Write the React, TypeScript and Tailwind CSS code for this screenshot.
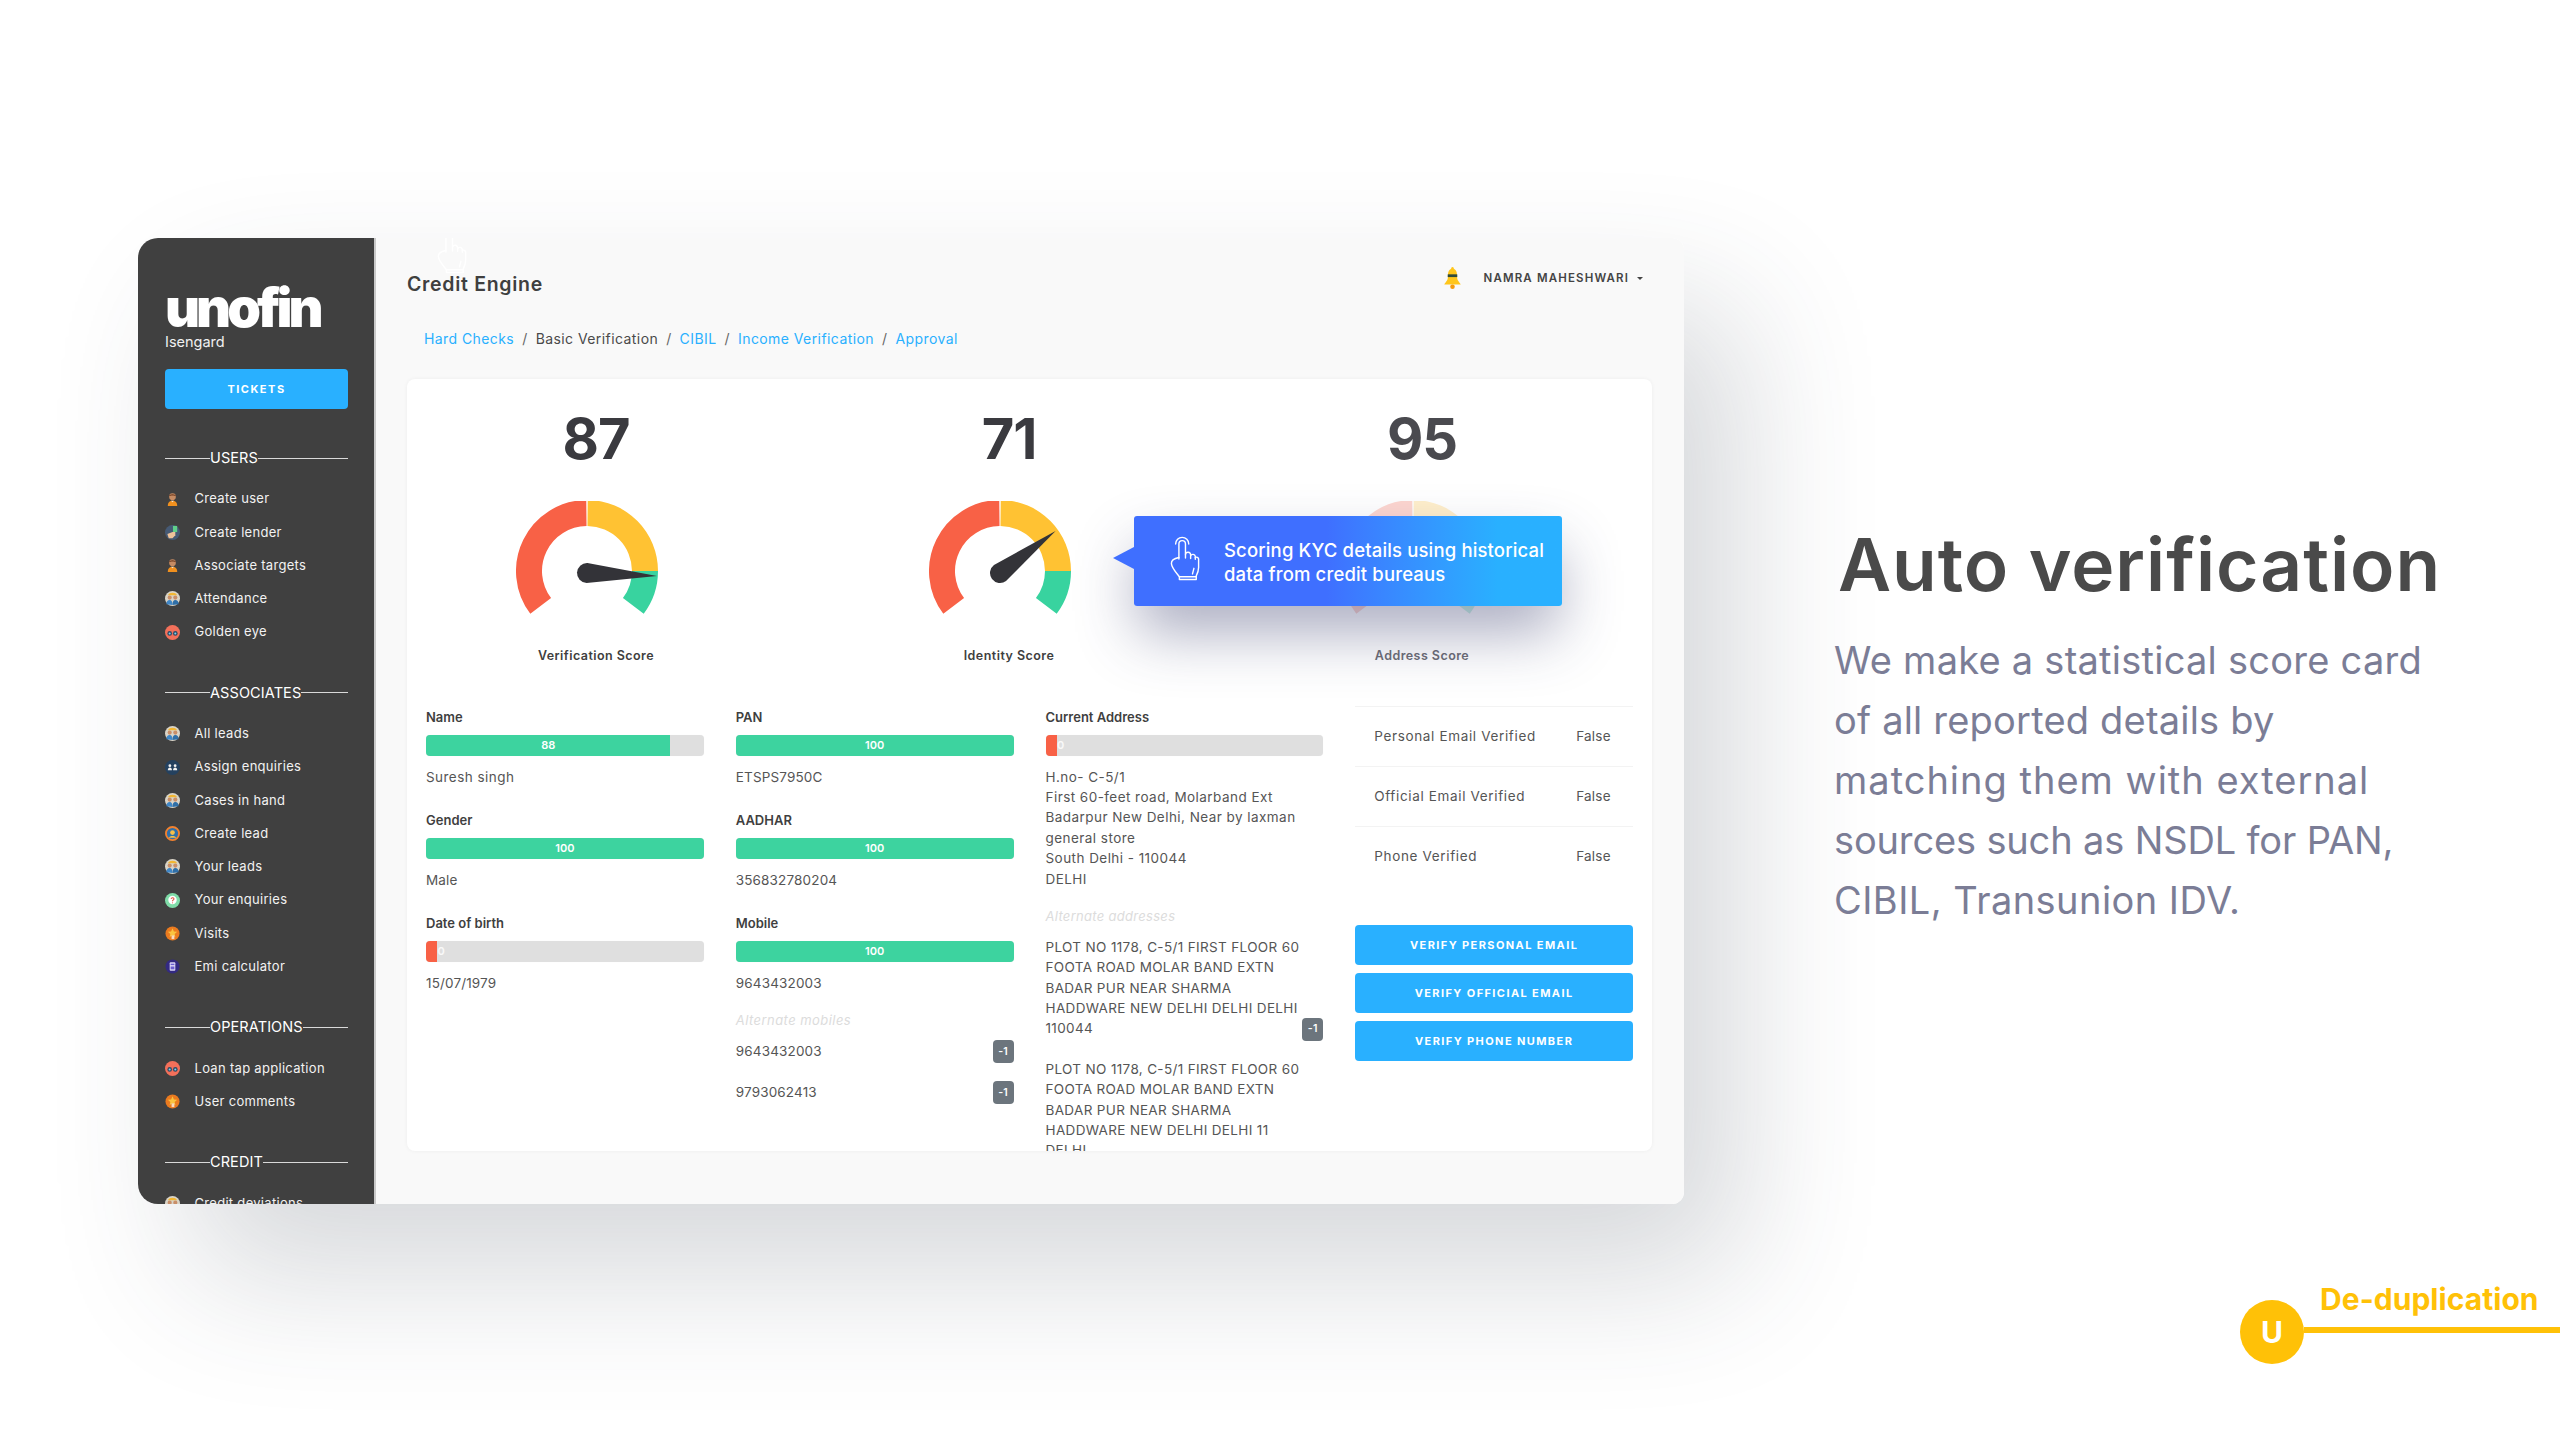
import type { ReactNode } from "react";

type IconName = "person" | "lender" | "team" | "eye" | "scale" | "gear" | "question" | "star" | "calc";

function MenuIcon({ name }: { name: IconName }) {
  return (
    <svg viewBox="0 0 16 16" className="w-[15px] h-[15px] shrink-0">
      {name === "person" && (
        <>
          <circle cx="8" cy="5" r="3.6" fill="#c58b63" />
          <path d="M4.2 4.6C4.4 1.6 11.6 1.6 11.8 4.6 10 3.4 6 3.4 4.2 4.6Z" fill="#6d3b20" />
          <path d="M3 15c0-4 2-5.6 5-5.6s5 1.6 5 5.6Z" fill="#f0901e" />
          <path d="M6.4 9.4 8 11l1.6-1.6Z" fill="#f5e6d8" />
        </>
      )}
      {name === "lender" && (
        <>
          <circle cx="8" cy="8" r="8" fill="#465a75" />
          <rect x="8.5" y="1" width="4.5" height="6.5" fill="#5fd08a" />
          <path d="M2.5 9.5 8 7.5h3v3.5L8 14H4Z" fill="#eec39a" />
        </>
      )}
      {name === "team" && (
        <>
          <circle cx="8" cy="8" r="8" fill="#d9d4c8" />
          <path d="M3 4.5C4.5 1 11.5 1 13 4.5Z" fill="#f2b632" />
          <circle cx="5" cy="7" r="2.2" fill="#c98e68" />
          <circle cx="11" cy="7" r="2.2" fill="#c98e68" />
          <path d="M1.500 14c0-3 1.500-4.500 3.500-4.500S8 11 8 15Z" fill="#3f86c6" />
          <path d="M8 15c0-4 1-5.500 3-5.500s3.500 1.500 3.500 4.500Z" fill="#2f6fa8" />
        </>
      )}
      {name === "eye" && (
        <>
          <circle cx="8" cy="8" r="8" fill="#f3705a" />
          <circle cx="5" cy="9" r="2.5" fill="#2e4b66" />
          <circle cx="11" cy="9" r="2.5" fill="#2e4b66" />
          <circle cx="5" cy="9" r="1.1" fill="#7fd0ee" />
          <circle cx="11" cy="9" r="1.1" fill="#7fd0ee" />
        </>
      )}
      {name === "scale" && (
        <>
          <circle cx="8" cy="8" r="8" fill="#24415f" />
          <circle cx="5.2" cy="6" r="1.5" fill="#f1f1f1" />
          <circle cx="10.8" cy="6" r="1.5" fill="#f1f1f1" />
          <path d="M3 11c0-2 1-3 2.200-3s2.200 1 2.200 3ZM8.600 11c0-2 1-3 2.200-3S13 9 13 11Z" fill="#f1f1f1" />
        </>
      )}
      {name === "gear" && (
        <>
          <circle cx="8" cy="8" r="7" fill="#2f6fa8" stroke="#f2812e" strokeWidth="2" />
          <circle cx="8" cy="7" r="2.5" fill="#f5c04a" />
          <path d="M4 12.500c1-2.500 7-2.500 8 0Z" fill="#f5c04a" />
        </>
      )}
      {name === "question" && (
        <>
          <circle cx="8" cy="8" r="8" fill="#7fdca8" />
          <circle cx="8" cy="7.5" r="4.5" fill="#fff" />
          <path d="M6.500 6.200c.3-1.700 3.200-1.500 3.100.2-.1 1-1.600 1-1.600 2.300M8 10v.9" stroke="#e0523f" strokeWidth="1.1" fill="none" />
        </>
      )}
      {name === "star" && (
        <>
          <circle cx="8" cy="8" r="7.5" fill="#ea7a1f" />
          <path d="m8 2.500 1.500 3.300 3.500.3-2.700 2.300.8 3.400L8 10.200l-3.100 1.600.8-3.400L3 6.100l3.500-.3Z" fill="#f9c440" />
          <rect x="7" y="10" width="3" height="4" fill="#f6dcc0" />
        </>
      )}
      {name === "calc" && (
        <>
          <circle cx="8" cy="8" r="7.5" fill="#332a82" />
          <rect x="5" y="3.5" width="6" height="9" rx="1" fill="#dcd8f5" />
          <rect x="6" y="5" width="4" height="1.5" fill="#6c5fd0" />
          <rect x="6" y="8" width="4" height="3" fill="#6c5fd0" />
        </>
      )}
    </svg>
  );
}

function MenuSection({ title, items }: { title: string; items: [IconName, string][] }) {
  return (
    <div className="mt-[34px]">
      <div className="flex items-center h-[20px] text-[14.5px] text-white tracking-[0.1px]">
        <div className="w-[45px] h-px bg-white/80" />
        <span>{title}</span>
        <div className="flex-1 h-px bg-white/80" />
      </div>
      <div className="mt-[14.5px]">
        {items.map(([icon, label]) => (
          <div key={label} className="flex items-center h-[33.25px]">
            <MenuIcon name={icon} />
            <span className="ml-[14.5px] text-[13px] text-[#f2f2f2] tracking-[0.3px] whitespace-nowrap">{label}</span>
          </div>
        ))}
      </div>
    </div>
  );
}

function Sidebar() {
  return (
    <div className="w-[238px] shrink-0 bg-[#404040] border-r-2 border-[#c9c9c9] pl-[27px] pr-[26px] pt-[43px] overflow-hidden">
      <div className="h-[53px] text-[54px] leading-[53px] font-black text-white tracking-[-4px]">unofin</div>
      <div className="h-[16px] text-[14.5px] leading-[16px] text-[#f0f0f0]">Isengard</div>
      <div className="mt-[19px] h-[40px] pt-px rounded-[4px] bg-[#29b0ff] flex items-center justify-center text-white text-[11px] font-bold tracking-[1.5px]">
        TICKETS
      </div>
      <div className="pt-[5px]">
        <MenuSection
          title="USERS"
          items={[
            ["person", "Create user"],
            ["lender", "Create lender"],
            ["person", "Associate targets"],
            ["team", "Attendance"],
            ["eye", "Golden eye"],
          ]}
        />
        <MenuSection
          title="ASSOCIATES"
          items={[
            ["team", "All leads"],
            ["scale", "Assign enquiries"],
            ["team", "Cases in hand"],
            ["gear", "Create lead"],
            ["team", "Your leads"],
            ["question", "Your enquiries"],
            ["star", "Visits"],
            ["calc", "Emi calculator"],
          ]}
        />
        <MenuSection
          title="OPERATIONS"
          items={[
            ["eye", "Loan tap application"],
            ["star", "User comments"],
          ]}
        />
        <MenuSection title="CREDIT" items={[["team", "Credit deviations"]]} />
      </div>
    </div>
  );
}

const polar = (r: number, deg: number) => {
  const a = (deg * Math.PI) / 180;
  return [r * Math.cos(a), r * Math.sin(a)];
};

const band = (from: number, to: number) => {
  const [x1, y1] = polar(71, from);
  const [x2, y2] = polar(71, to);
  const [x3, y3] = polar(45, to);
  const [x4, y4] = polar(45, from);
  return `M${x1} ${y1}A71 71 0 0 1 ${x2} ${y2}L${x3} ${y3}A45 45 0 0 0 ${x4} ${y4}Z`;
};

function Gauge({ tip, faded }: { tip?: [number, number]; faded?: boolean }) {
  let needle = "";
  if (tip) {
    const hub = [0, 2];
    const ang = Math.atan2(tip[1] - hub[1], tip[0] - hub[0]);
    const nx = -Math.sin(ang) * 10;
    const ny = Math.cos(ang) * 10;
    needle = `M${hub[0] + nx} ${hub[1] + ny}L${tip[0]} ${tip[1]}L${hub[0] - nx} ${hub[1] - ny}A10 10 0 0 0 ${hub[0] + nx} ${hub[1] + ny}Z`;
  }
  return (
    <svg viewBox="-71 -70 160 120" className={`w-[160px] h-[120px] mx-auto ${faded ? "opacity-25" : ""}`}>
      <path d={band(143, 269.4)} fill="#f86146" />
      <path d={band(270.6, 360)} fill="#ffc233" />
      <path d={band(0, 37)} fill="#38d39f" />
      {tip && <path d={needle} fill="#333338" />}
    </svg>
  );
}

function ScoreColumn({ score, label, tip, faded }: { score: number; label: string; tip?: [number, number]; faded?: boolean }) {
  return (
    <div className="flex flex-col items-center">
      <div className={`mt-px text-[56px] leading-[58px] font-bold tracking-[-1px] ${faded ? "text-[#4a4a4f]" : "text-[#3a3a3f]"}`}>{score}</div>
      <div className="mt-[33px] w-full">
        <Gauge tip={tip} faded={faded} />
      </div>
      <div className={`mt-[25px] h-[20px] leading-[20px] text-[12.5px] font-semibold tracking-[0.45px] ${faded ? "text-[#6d6d75]" : "text-[#3f3f3f]"}`}>{label}</div>
    </div>
  );
}

function Bar({ value }: { value: number }) {
  const low = value < 10;
  return (
    <div className="relative mt-[9px] h-[21px] rounded-[4px] bg-[#dfdfdf] overflow-hidden shadow-[0_0_1px_rgba(0,0,0,0.06)]">
      <div
        className={`h-full flex items-center justify-center text-[11px] font-semibold text-white ${low ? "bg-[#f86146] overflow-visible" : "bg-[#3dd39f]"}`}
        style={{ width: low ? "11px" : `${value}%` }}
      >
        {low ? <span className="ml-[19px] text-white/80">0</span> : value}
      </div>
    </div>
  );
}

function Field({ label, value, children }: { label: string; value: number; children: ReactNode }) {
  return (
    <div className="mb-[23.75px]">
      <div className="h-[18px] leading-[18px] text-[13px] font-semibold text-[#3f3f3f]">{label}</div>
      <Bar value={value} />
      <div className="mt-[11px] leading-[20.4px] text-[13.5px] text-[#555] tracking-[0.15px] whitespace-nowrap">{children}</div>
    </div>
  );
}

function Badge() {
  return <div className="w-[21px] h-[23px] rounded-[4px] bg-[#6c757d] flex items-center justify-center text-white text-[10.5px] font-semibold shrink-0">-1</div>;
}

function AltRow({ value }: { value: string }) {
  return (
    <div className="flex items-center justify-between h-[22px] mb-[19px] text-[13.5px] text-[#555] tracking-[0.15px]">
      <span>{value}</span>
      <div className="mt-px">
        <Badge />
      </div>
    </div>
  );
}

function Hand({ className }: { className: string }) {
  return (
    <svg viewBox="0 0 32 48" fill="none" stroke="currentColor" strokeWidth="1.5" strokeLinecap="round" strokeLinejoin="round" className={className}>
      <path d="M6 9a7 7 0 0 1 14 0" />
      <path d="M9.500 25V9a3.500 3.500 0 0 1 7 0v15" />
      <path d="M16.500 20a2.800 2.800 0 0 1 5.500.5v4" />
      <path d="M22 21.500a2.700 2.700 0 0 1 5 .8v3" />
      <path d="M27 23.500a2.200 2.200 0 0 1 3.500 1.500v9c0 4-1.500 7-2.500 9v4H10v-3C7 40 2 35 1.500 30c-.2-3 3-5.500 8-6.500" />
      <path d="M25.500 35l-1.500 6M10 44h18" />
    </svg>
  );
}

const bodyLines = [
  { text: "We make a statistical score card", tracking: "tracking-[0.25px]" },
  { text: "of all reported details by", tracking: "tracking-[0.2px]" },
  { text: "matching them with external", tracking: "tracking-[1px]" },
  { text: "sources such as NSDL for PAN,", tracking: "tracking-[-0.15px]" },
  { text: "CIBIL, Transunion IDV.", tracking: "tracking-[0.45px]" },
];

function Main() {
  return (
    <div className="relative flex-1 bg-[#f9f9f9] pl-[31px] pr-[32px] pt-[35px] overflow-hidden">
      <Hand className="absolute left-[61px] -top-[12px] w-[30px] h-[50px] text-white" />
      <div className="flex items-center h-[24px] justify-between">
        <div className="text-[19.5px] font-semibold text-[#3f3f3f] tracking-[0.7px]">Credit Engine</div>
        <div className="flex items-center pr-[9px] -mt-[12px]">
          <svg viewBox="0 0 18 24" className="w-[17px] h-[22px] -mt-[2px]">
            <path d="M9 0c1 0 1.500 1 1.500 2C14 3.500 14 8 14 11c0 4 3 6 4 8H0c1-2 4-4 4-8 0-3 0-7.500 3.500-9C7.500 1 8 0 9 0Z" fill="#ffc61b" />
            <rect x="3.8" y="8" width="10.4" height="3" fill="#2f4a3a" />
            <circle cx="9" cy="21.5" r="2.5" fill="#f59a0c" />
          </svg>
          <span className="ml-[23px] text-[11.5px] font-semibold text-[#444] tracking-[1.15px]">NAMRA MAHESHWARI</span>
          <span className="ml-[8px] w-0 h-0 border-x-[3px] border-x-transparent border-t-[3px] border-t-[#444] -translate-y-[1px]" />
        </div>
      </div>
      <div className="mt-[32px] ml-[17px] h-[20px] flex items-center text-[14px] leading-[20px] tracking-[0.42px] whitespace-nowrap">
        <span className="text-[#29b0ff]">Hard Checks</span>
        <span className="mx-[8px] text-[#666]">/</span>
        <span className="text-[#4a4a4a]">Basic Verification</span>
        <span className="mx-[8px] text-[#666]">/</span>
        <span className="text-[#29b0ff]">CIBIL</span>
        <span className="mx-[8px] text-[#666]">/</span>
        <span className="text-[#29b0ff]">Income Verification</span>
        <span className="mx-[8px] text-[#666]">/</span>
        <span className="text-[#29b0ff]">Approval</span>
      </div>
      <div className="relative mt-[30px] h-[772px] rounded-[8px] bg-white shadow-[0_0_4px_rgba(0,0,0,0.05)]">
        <div className="grid grid-cols-3 gap-[35px] pt-[30px] w-[1204px]">
          <ScoreColumn score={87} label="Verification Score" tip={[70, 5]} />
          <ScoreColumn score={71} label="Identity Score" tip={[55.6, -40]} />
          <ScoreColumn score={95} label="Address Score" faded />
        </div>
        <div className="mt-[40px] mx-[19px] h-[445px] grid grid-cols-4 gap-x-[32px] overflow-hidden">
          <div className="pt-[1.5px]">
            <Field label="Name" value={88}>
              <span className="tracking-[0.45px]">Suresh singh</span>
            </Field>
            <Field label="Gender" value={100}>Male</Field>
            <Field label="Date of birth" value={0}>15/07/1979</Field>
          </div>
          <div className="pt-[1.5px]">
            <Field label="PAN" value={100}>ETSPS7950C</Field>
            <Field label="AADHAR" value={100}>356832780204</Field>
            <Field label="Mobile" value={100}>9643432003</Field>
            <div className="-mt-[6px] h-[18px] leading-[18px] text-[13px] italic text-[#dcdcdc] tracking-[0.45px]">Alternate mobiles</div>
            <div className="mt-[11px]">
              <AltRow value="9643432003" />
              <AltRow value="9793062413" />
            </div>
          </div>
          <div className="pt-[1.5px]">
            <Field label="Current Address" value={0}>
              <span className="tracking-[0.45px]">
                H.no- C-5/1
                <br />
                First 60-feet road, Molarband Ext
                <br />
                Badarpur New Delhi, Near by laxman
                <br />
                general store
                <br />
                South Delhi - 110044
                <br />
                DELHI
              </span>
            </Field>
            <div className="-mt-[6px] h-[18px] leading-[18px] text-[13px] italic text-[#dcdcdc] tracking-[0.3px]">Alternate addresses</div>
            <div className="mt-[12px] flex items-end justify-between text-[13.5px] leading-[20.4px] text-[#555] tracking-[0.35px] whitespace-nowrap">
              <div>
                PLOT NO 1178, C-5/1 FIRST FLOOR 60
                <br />
                FOOTA ROAD MOLAR BAND EXTN
                <br />
                BADAR PUR NEAR SHARMA
                <br />
                HADDWARE NEW DELHI DELHI DELHI
                <br />
                110044
              </div>
              <div className="-mb-[2px]">
                <Badge />
              </div>
            </div>
            <div className="mt-[20px] text-[13.5px] leading-[20.4px] text-[#555] tracking-[0.35px] whitespace-nowrap">
              PLOT NO 1178, C-5/1 FIRST FLOOR 60
              <br />
              FOOTA ROAD MOLAR BAND EXTN
              <br />
              BADAR PUR NEAR SHARMA
              <br />
              HADDWARE NEW DELHI DELHI 11
              <br />
              DELHI
            </div>
          </div>
          <div>
            {["Personal Email Verified", "Official Email Verified", "Phone Verified"].map((label) => (
              <div key={label} className="flex items-center h-[60px] border-t border-[#f3f3f3] text-[13.5px] text-[#555] tracking-[0.65px]">
                <span className="w-[221px] pl-[19px]">{label}</span>
                <span className="tracking-[0.2px]">False</span>
              </div>
            ))}
            <div className="mt-[39px] flex flex-col gap-[8px]">
              {["VERIFY PERSONAL EMAIL", "VERIFY OFFICIAL EMAIL", "VERIFY PHONE NUMBER"].map((label) => (
                <div key={label} className="h-[40px] pt-px rounded-[4px] bg-[#29b0ff] flex items-center justify-center text-white text-[11px] font-bold tracking-[1.4px]">
                  {label}
                </div>
              ))}
            </div>
          </div>
        </div>
        <div className="absolute left-[727px] top-[137px] w-[428px] h-[90px] rounded-[3px] bg-linear-to-r from-[#3f6fff] from-45% to-[#29b0ff] to-85% shadow-[0_30px_60px_-4px_rgba(50,55,105,0.42)] flex items-center text-white">
          <div className="absolute -left-[21px] top-[31px] w-0 h-0 border-y-[11px] border-y-transparent border-r-[21px] border-r-[#3f6fff]" />
          <Hand className="ml-[36px] w-[30px] h-[48px] shrink-0 -mt-[6px]" />
          <div className="ml-[24px] mt-px text-[18.5px] leading-[24px] font-medium tracking-[0.15px] whitespace-nowrap">
            Scoring KYC details using historical
            <br />
            data from credit bureaus
          </div>
        </div>
      </div>
    </div>
  );
}

export default function App() {
  return (
    <div className="relative w-[2560px] h-[1440px] bg-white overflow-hidden pt-[238px] font-[family-name:Inter,'Liberation_Sans',sans-serif]">
      <div className="flex h-[966px] pl-[138px]">
        <div className="flex w-[1546px] h-[966px] rounded-l-[20px] rounded-r-[12px] overflow-hidden shadow-[55px_70px_140px_rgba(50,60,75,0.2)]">
          <Sidebar />
          <Main />
        </div>
        <div className="ml-[151px] pt-[282px]">
          <div className="h-[90px] text-[73px] leading-[90px] font-semibold text-[#4a4a4a] ml-[3px] tracking-[1px] whitespace-nowrap">Auto verification</div>
          <div className="mt-[20px] text-[38px] leading-[60px] text-[#7b7d96] -ml-[1px] whitespace-nowrap">
            {bodyLines.map((line) => (
              <div key={line.text} className={line.tracking}>
                {line.text}
              </div>
            ))}
          </div>
        </div>
      </div>
      <div className="mt-[96px] flex items-center justify-end">
        <div className="relative w-[64px] h-[64px] rounded-full bg-[#ffc107] flex items-center justify-center text-white text-[30px] font-bold shrink-0">U</div>
        <div className="relative w-[256px] h-[6px] bg-[#ffc107] mt-[-4px]">
          <div className="absolute left-[16px] -top-[46px] text-[30px] leading-[36px] font-bold text-[#ffc107] tracking-[0.05px] whitespace-nowrap">De-duplication</div>
        </div>
      </div>
    </div>
  );
}
